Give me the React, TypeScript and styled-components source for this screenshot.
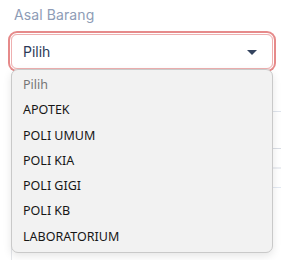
import React from 'react';
import styled, { createGlobalStyle } from 'styled-components';

const GlobalStyle = createGlobalStyle`
  html, body {
    margin: 0;
    padding: 0;
    background: #fff;
  }
`;

const Page = styled.div`
  position: relative;
  width: 281px;
  height: 260px;
  overflow: hidden;
  font-family: 'Inter', 'Noto Sans', sans-serif;
`;

const Field = styled.div`
  padding: 6px 8px 0 11px;
  position: relative;
`;

const Label = styled.div`
  font-size: 14px;
  color: #8e9cb6;
  padding-left: 3px;
  margin-bottom: 11px;
  letter-spacing: 0.1px;
`;

const SelectBox = styled.div`
  position: relative;
  height: 35px;
  width: 262px;
  box-sizing: border-box;
  border: 1px solid #eeb0b0;
  border-radius: 6px;
  box-shadow: 0 0 0 1px #fff, 0 0 0 3px #e68a8a;
  display: flex;
  align-items: center;
  padding: 0 15px 0 11px;
  justify-content: space-between;
  color: #2b3a57;
  font-size: 14px;
`;

const Caret = styled.span`
  width: 0;
  height: 0;
  margin-top: 2px;
  border-left: 5px solid transparent;
  border-right: 5px solid transparent;
  border-top: 5px solid #34445f;
`;

const Backdrop = styled.div`
  margin: 5px 0 0 11px;
  height: 200px;
  border-left: 1px solid #e4e6ea;
  display: flex;
  flex-direction: column;
`;

const BgLine = styled.div<{ gap: number; thick?: boolean; tint?: string }>`
  margin-top: ${p => p.gap}px;
  height: ${p => (p.thick ? 2 : 1)}px;
  background: ${p => p.tint || '#dfe4ec'};
`;

const Menu = styled.ul`
  position: absolute;
  left: 11px;
  top: 69px;
  width: 262px;
  box-sizing: border-box;
  margin: 0;
  padding: 2px 0 3px;
  list-style: none;
  background: #f2f2f2;
  border: 1px solid #c9c9c9;
  border-radius: 7px;
  box-shadow: 0 3px 8px rgba(0, 0, 0, 0.1);
  z-index: 2;
  font-family: 'Noto Sans', 'Open Sans', sans-serif;
`;

const Option = styled.li<{ muted?: boolean }>`
  height: 25.3px;
  line-height: 25.3px;
  padding-left: 11px;
  font-size: 12.5px;
  color: ${p => (p.muted ? '#757575' : '#161616')};
`;

const options = ['APOTEK', 'POLI UMUM', 'POLI KIA', 'POLI GIGI', 'POLI KB', 'LABORATORIUM'];

export default function App() {
  return (
    <Page>
      <GlobalStyle />
      <Field>
        <Label>Asal Barang</Label>
        <SelectBox>
          <span>Pilih</span>
          <Caret />
        </SelectBox>
      </Field>
      <Backdrop>
        <BgLine gap={37} />
        <BgLine gap={36} tint="#d9dde4" />
        <BgLine gap={18} thick tint="#eceef2" />
        <BgLine gap={18} tint="#e3e9f2" />
      </Backdrop>
      <Menu>
        <Option muted>Pilih</Option>
        {options.map(o => (
          <Option key={o}>{o}</Option>
        ))}
      </Menu>
    </Page>
  );
}
